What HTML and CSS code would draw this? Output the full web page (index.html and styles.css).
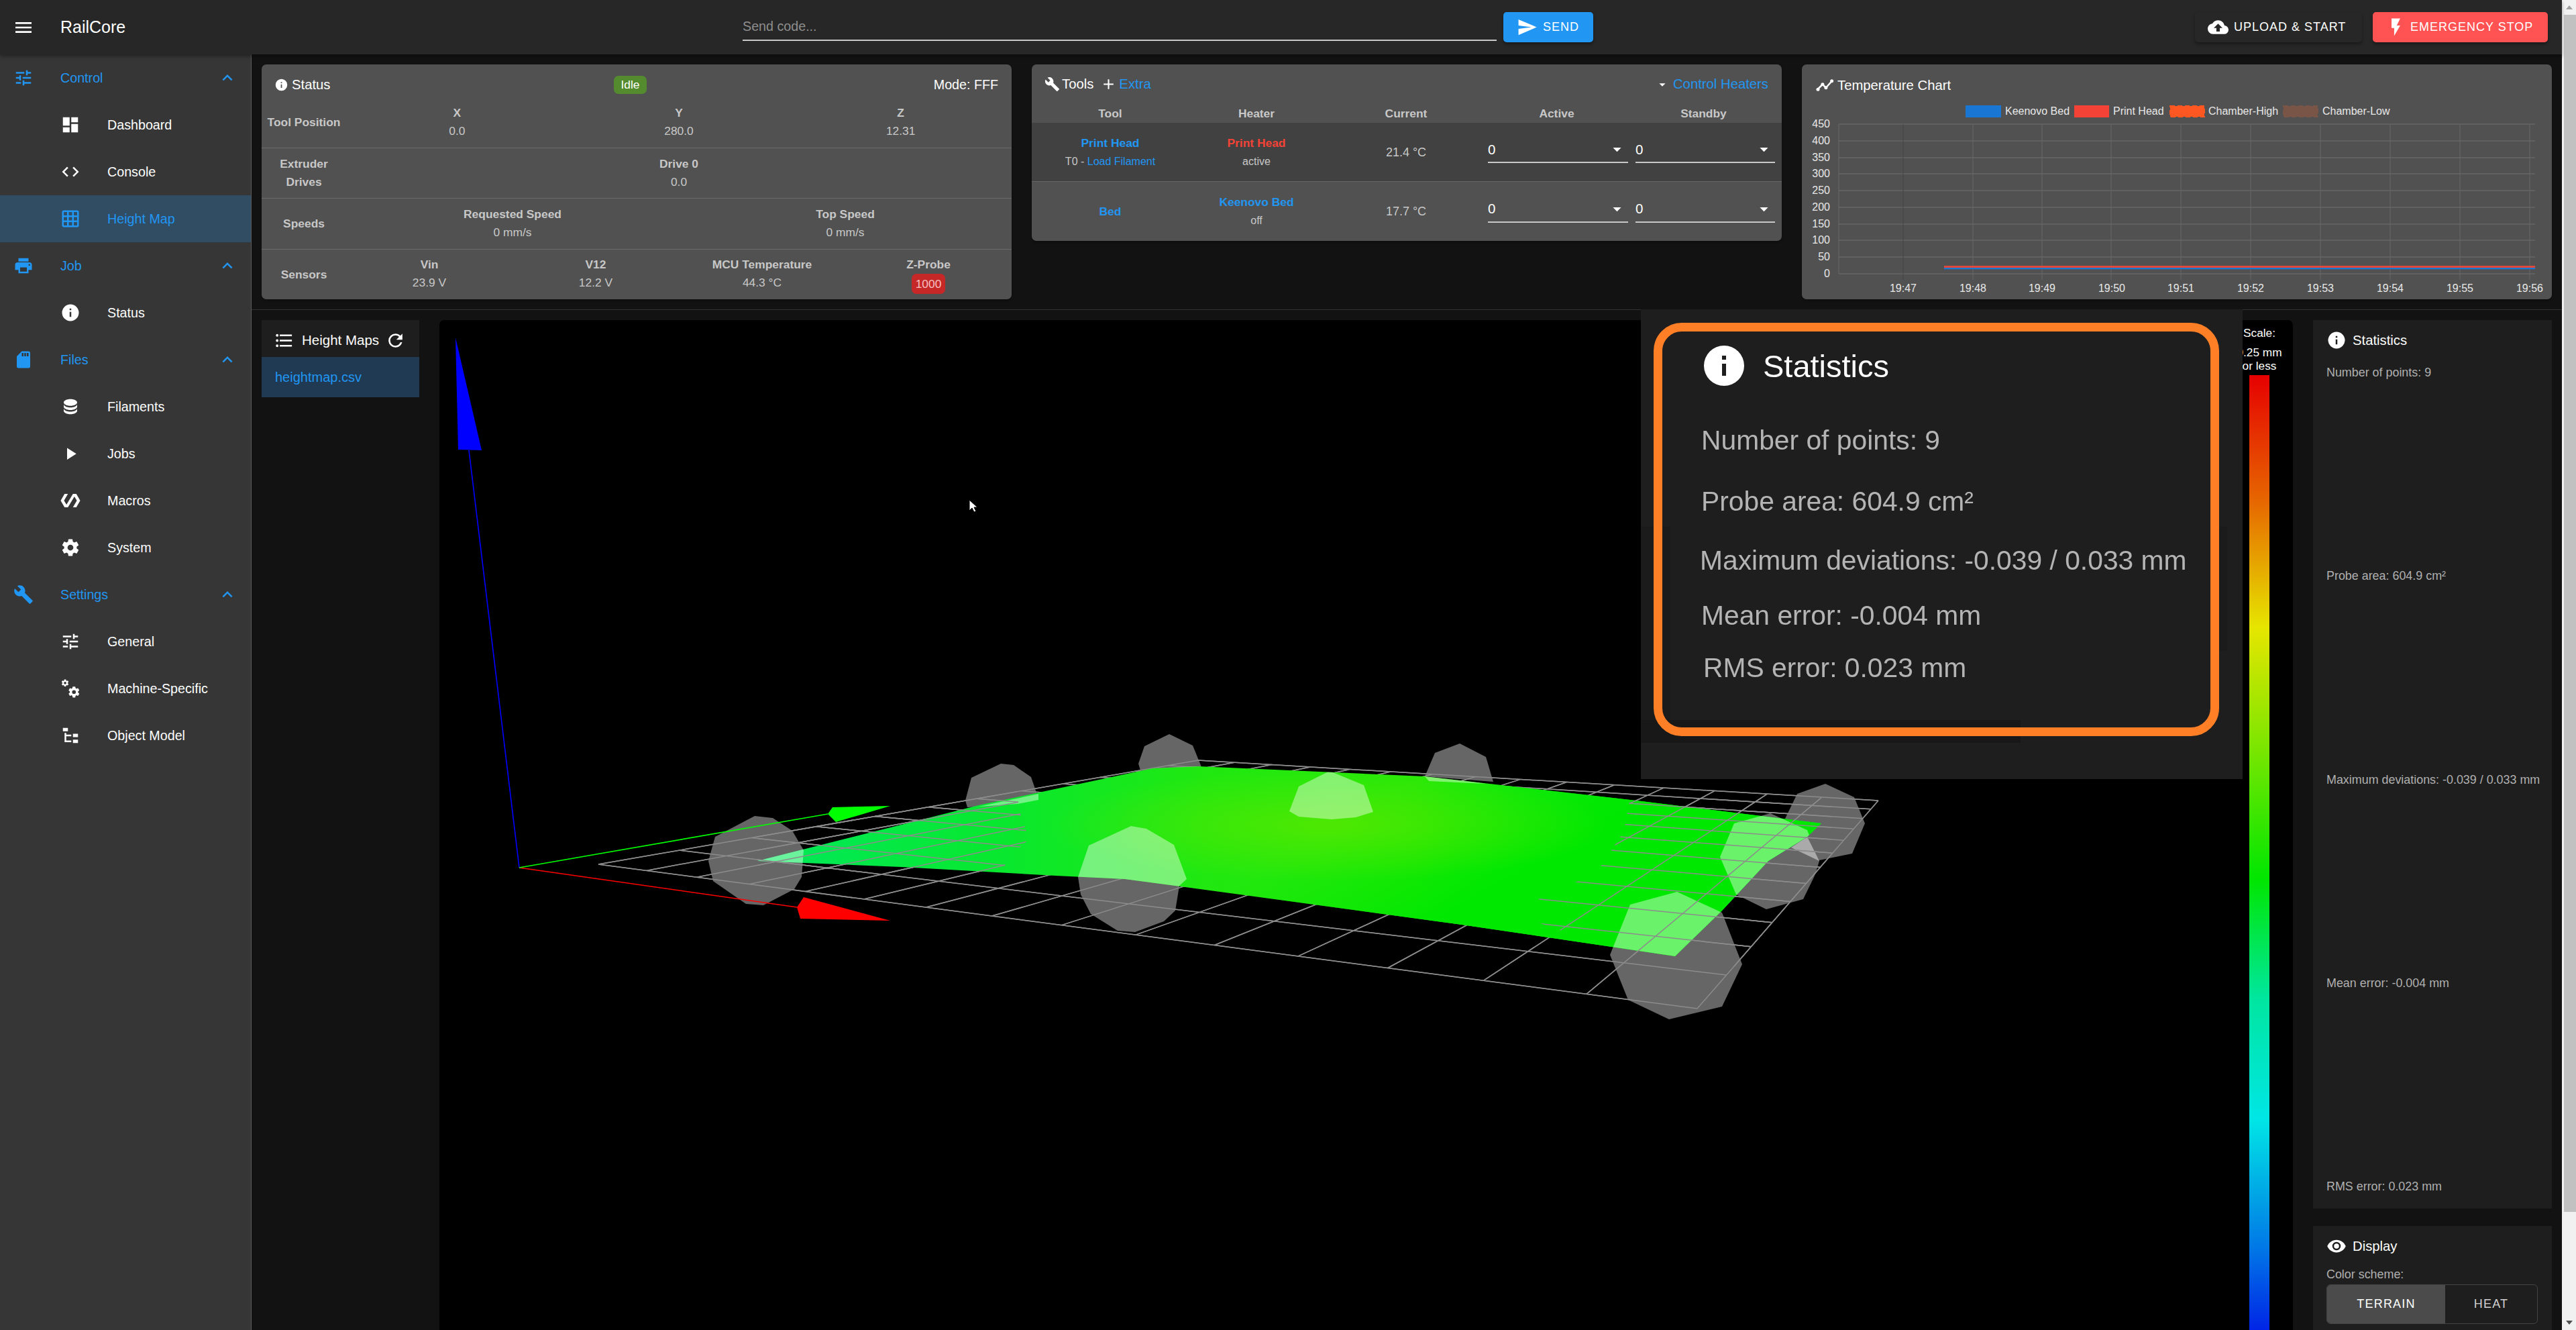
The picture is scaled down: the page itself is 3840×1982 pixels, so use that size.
FILE: index.html
```html
<!DOCTYPE html>
<html lang="en">
<head>
<meta charset="utf-8">
<title>RailCore</title>
<link rel="stylesheet" href="styles.css">
</head>
<body>
<svg class="sprite" aria-hidden="true">
  <defs>
    <path id="p-cog" d="M12,15.5A3.5,3.5 0 0,1 8.5,12A3.5,3.5 0 0,1 12,8.5A3.5,3.5 0 0,1 15.5,12A3.5,3.5 0 0,1 12,15.5M19.43,12.97C19.47,12.65 19.5,12.33 19.5,12C19.5,11.67 19.47,11.34 19.43,11L21.54,9.37C21.73,9.22 21.78,8.95 21.66,8.73L19.66,5.27C19.54,5.05 19.27,4.96 19.05,5.05L16.56,6.05C16.04,5.66 15.5,5.32 14.87,5.07L14.5,2.42C14.46,2.18 14.25,2 14,2H10C9.75,2 9.54,2.18 9.5,2.42L9.13,5.07C8.5,5.32 7.96,5.66 7.44,6.05L4.95,5.05C4.73,4.96 4.46,5.05 4.34,5.27L2.34,8.73C2.21,8.95 2.27,9.22 2.46,9.37L4.57,11C4.53,11.34 4.5,11.67 4.5,12C4.5,12.33 4.53,12.65 4.57,12.97L2.46,14.63C2.27,14.78 2.21,15.05 2.34,15.27L4.34,18.73C4.46,18.95 4.73,19.03 4.95,18.95L7.44,17.94C7.96,18.34 8.5,18.68 9.13,18.93L9.5,21.58C9.54,21.82 9.75,22 10,22H14C14.25,22 14.46,21.82 14.5,21.58L14.87,18.93C15.5,18.67 16.04,18.34 16.56,17.94L19.05,18.95C19.27,19.03 19.54,18.95 19.66,18.73L21.66,15.27C21.78,15.05 21.73,14.78 21.54,14.63L19.43,12.97Z"/>
  </defs>
  <symbol id="i-menu" viewBox="0 0 24 24"><path d="M3,6H21V8H3V6M3,11H21V13H3V11M3,16H21V18H3V16Z"/></symbol>
  <symbol id="i-tune" viewBox="0 0 24 24"><path d="M3,17V19H9V17H3M3,5V7H13V5H3M13,21V19H21V17H13V15H11V21H13M7,9V11H3V13H7V15H9V9H7M21,13V11H11V13H21M15,9H17V7H21V5H17V3H15V9Z"/></symbol>
  <symbol id="i-dash" viewBox="0 0 24 24"><path d="M13,3V9H21V3M13,21H21V11H13M3,21H11V15H3M3,13H11V3H3V13Z"/></symbol>
  <symbol id="i-code" viewBox="0 0 24 24"><path d="M14.6,16.6L19.2,12L14.6,7.4L16,6L22,12L16,18L14.6,16.6M9.4,16.6L4.8,12L9.4,7.4L8,6L2,12L8,18L9.4,16.6Z"/></symbol>
  <symbol id="i-grid" viewBox="0 0 24 24"><path d="M10,4V8H14V4H10M16,4V8H20V4H16M16,10V14H20V10H16M16,16V20H20V16H16M14,20V16H10V20H14M8,20V16H4V20H8M8,14V10H4V14H8M8,8V4H4V8H8M10,14H14V10H10V14M4,2H20A2,2 0 0,1 22,4V20A2,2 0 0,1 20,22H4C2.92,22 2,21.1 2,20V4A2,2 0 0,1 4,2Z"/></symbol>
  <symbol id="i-print" viewBox="0 0 24 24"><path d="M18,3H6V7H18M19,12A1,1 0 0,1 18,11A1,1 0 0,1 19,10A1,1 0 0,1 20,11A1,1 0 0,1 19,12M16,19H8V14H16M19,8H5A3,3 0 0,0 2,11V17H6V21H18V17H22V11A3,3 0 0,0 19,8Z"/></symbol>
  <symbol id="i-info" viewBox="0 0 24 24"><path d="M13,9H11V7H13M13,17H11V11H13M12,2A10,10 0 0,0 2,12A10,10 0 0,0 12,22A10,10 0 0,0 22,12A10,10 0 0,0 12,2Z"/></symbol>
  <symbol id="i-sd" viewBox="0 0 24 24"><path d="M18,8H16V4H18M15,8H13V4H15M12,8H10V4H12M18,2H10L4,8V20A2,2 0 0,0 6,22H18A2,2 0 0,0 20,20V4A2,2 0 0,0 18,2Z"/></symbol>
  <symbol id="i-db" viewBox="0 0 24 24"><path d="M12,3C7.58,3 4,4.79 4,7C4,9.21 7.58,11 12,11C16.42,11 20,9.21 20,7C20,4.79 16.42,3 12,3M4,9V12C4,14.21 7.58,16 12,16C16.42,16 20,14.21 20,12V9C20,11.21 16.42,13 12,13C7.58,13 4,11.21 4,9M4,14V17C4,19.21 7.58,21 12,21C16.42,21 20,19.21 20,17V14C20,16.21 16.42,18 12,18C7.58,18 4,16.21 4,14Z"/></symbol>
  <symbol id="i-play" viewBox="0 0 24 24"><path d="M8,5.14V19.14L19,12.14L8,5.14Z"/></symbol>
  <symbol id="i-poly" viewBox="0 0 24 24"><path d="M19,4H15L7.3,16.89L4.35,12L9,4H5L0.35,12L5,20H9L16.7,7.11L19.65,12L15,20H19L23.65,12L19,4Z"/></symbol>
  <symbol id="i-cog" viewBox="0 0 24 24"><use href="#p-cog"/></symbol>
  <symbol id="i-cogs" viewBox="0 0 24 24"><use href="#p-cog" transform="translate(8.4,8.4) scale(.65)"/><use href="#p-cog" transform="translate(.6,.4) scale(.42)"/></symbol>
  <symbol id="i-wrench" viewBox="0 0 24 24"><path d="M22.7,19L13.6,9.9C14.5,7.6 14,4.9 12.1,3C10.1,1 7.1,0.6 4.7,1.7L9,6L6,9L1.6,4.7C0.4,7.1 0.9,10.1 2.9,12.1C4.8,14 7.5,14.5 9.8,13.6L18.9,22.7C19.3,23.1 19.9,23.1 20.3,22.7L22.6,20.4C23.1,20 23.1,19.3 22.7,19Z"/></symbol>
  <symbol id="i-tree" viewBox="0 0 24 24"><path d="M3,3H9V7H3V3M15,10H21V14H15V10M15,17H21V21H15V17M13,13H7V18H13V20H7L5,20V9H7V11H13V13Z"/></symbol>
  <symbol id="i-up" viewBox="0 0 24 24"><path d="M7.41,15.41L12,10.83L16.59,15.41L18,14L12,8L6,14L7.41,15.41Z"/></symbol>
  <symbol id="i-list" viewBox="0 0 24 24"><path d="M7,5H21V7H7V5M7,13V11H21V13H7M4,4.5A1.5,1.5 0 0,1 5.5,6A1.5,1.5 0 0,1 4,7.5A1.5,1.5 0 0,1 2.5,6A1.5,1.5 0 0,1 4,4.5M4,10.5A1.5,1.5 0 0,1 5.5,12A1.5,1.5 0 0,1 4,13.5A1.5,1.5 0 0,1 2.5,12A1.5,1.5 0 0,1 4,10.5M7,19V17H21V19H7M4,16.5A1.5,1.5 0 0,1 5.5,18A1.5,1.5 0 0,1 4,19.5A1.5,1.5 0 0,1 2.5,18A1.5,1.5 0 0,1 4,16.5Z"/></symbol>
  <symbol id="i-refresh" viewBox="0 0 24 24"><path d="M17.65,6.35C16.2,4.9 14.21,4 12,4A8,8 0 0,0 4,12A8,8 0 0,0 12,20C15.73,20 18.84,17.45 19.73,14H17.65C16.83,16.33 14.61,18 12,18A6,6 0 0,1 6,12A6,6 0 0,1 12,6C13.66,6 15.14,6.69 16.22,7.78L13,11H20V4L17.65,6.35Z"/></symbol>
  <symbol id="i-send" viewBox="0 0 24 24"><path d="M2,21L23,12L2,3V10L17,12L2,14V21Z"/></symbol>
  <symbol id="i-cloud" viewBox="0 0 24 24"><path d="M14,13V17H10V13H7L12,8L17,13M19.35,10.03C18.67,6.59 15.64,4 12,4C9.11,4 6.6,5.64 5.35,8.03C2.34,8.36 0,10.9 0,14A6,6 0 0,0 6,20H19A5,5 0 0,0 24,15C24,12.36 21.95,10.22 19.35,10.03Z"/></symbol>
  <symbol id="i-flash" viewBox="0 0 24 24"><path d="M7,2V13H10V22L17,10H13L17,2H7Z"/></symbol>
  <symbol id="i-plus" viewBox="0 0 24 24"><path d="M19,13H13V19H11V13H5V11H11V5H13V11H19V13Z"/></symbol>
  <symbol id="i-down" viewBox="0 0 24 24"><path d="M7,10L12,15L17,10H7Z"/></symbol>
  <symbol id="i-chart" viewBox="0 0 24 24"><path d="M3.5,18.49L9.5,12.48L13.5,16.48L22,6.92L20.59,5.5L13.5,13.5L9.5,9.5L2,16.99L3.5,18.49Z"/><circle cx="4" cy="17" r="2"/><circle cx="9.5" cy="11" r="2"/><circle cx="13.5" cy="15" r="2"/><circle cx="20.5" cy="7" r="2"/></symbol>
  <symbol id="i-eye" viewBox="0 0 24 24"><path d="M12,9A3,3 0 0,0 9,12A3,3 0 0,0 12,15A3,3 0 0,0 15,12A3,3 0 0,0 12,9M12,17A5,5 0 0,1 7,12A5,5 0 0,1 12,7A5,5 0 0,1 17,12A5,5 0 0,1 12,17M12,4.5C7,4.5 2.73,7.61 1,12C2.73,16.39 7,19.5 12,19.5C17,19.5 21.27,16.39 23,12C21.27,7.61 17,4.5 12,4.5Z"/></symbol>
</svg>

<div class="viewport">
  <div class="app">
    <header class="topbar">
      <div class="brand">
        <svg class="ico ico-menu"><use href="#i-menu"/></svg>
        <span class="brand-name">RailCore</span>
      </div>
      <div class="code-input">Send code...</div>
      <button class="btn btn-send"><svg class="ico ico-btn"><use href="#i-send"/></svg>SEND</button>
      <div class="spacer"></div>
      <button class="btn btn-upload"><svg class="ico ico-btn"><use href="#i-cloud"/></svg>UPLOAD &amp; START</button>
      <button class="btn btn-stop"><svg class="ico ico-btn"><use href="#i-flash"/></svg>EMERGENCY STOP</button>
    </header>

    <div class="body">
      <nav class="sidebar">
        <div class="nav-group"><svg class="ico ico-nav"><use href="#i-tune"/></svg><span class="nav-label">Control</span><svg class="ico ico-nav chev"><use href="#i-up"/></svg></div>
        <div class="nav-item"><svg class="ico ico-nav"><use href="#i-dash"/></svg><span class="nav-label">Dashboard</span></div>
        <div class="nav-item"><svg class="ico ico-nav"><use href="#i-code"/></svg><span class="nav-label">Console</span></div>
        <div class="nav-item active"><svg class="ico ico-nav"><use href="#i-grid"/></svg><span class="nav-label">Height Map</span></div>
        <div class="nav-group"><svg class="ico ico-nav"><use href="#i-print"/></svg><span class="nav-label">Job</span><svg class="ico ico-nav chev"><use href="#i-up"/></svg></div>
        <div class="nav-item"><svg class="ico ico-nav"><use href="#i-info"/></svg><span class="nav-label">Status</span></div>
        <div class="nav-group"><svg class="ico ico-nav"><use href="#i-sd"/></svg><span class="nav-label">Files</span><svg class="ico ico-nav chev"><use href="#i-up"/></svg></div>
        <div class="nav-item"><svg class="ico ico-nav"><use href="#i-db"/></svg><span class="nav-label">Filaments</span></div>
        <div class="nav-item"><svg class="ico ico-nav"><use href="#i-play"/></svg><span class="nav-label">Jobs</span></div>
        <div class="nav-item"><svg class="ico ico-nav"><use href="#i-poly"/></svg><span class="nav-label">Macros</span></div>
        <div class="nav-item"><svg class="ico ico-nav"><use href="#i-cog"/></svg><span class="nav-label">System</span></div>
        <div class="nav-group"><svg class="ico ico-nav"><use href="#i-wrench"/></svg><span class="nav-label">Settings</span><svg class="ico ico-nav chev"><use href="#i-up"/></svg></div>
        <div class="nav-item"><svg class="ico ico-nav"><use href="#i-tune"/></svg><span class="nav-label">General</span></div>
        <div class="nav-item"><svg class="ico ico-nav"><use href="#i-cogs"/></svg><span class="nav-label">Machine-Specific</span></div>
        <div class="nav-item"><svg class="ico ico-nav"><use href="#i-tree"/></svg><span class="nav-label">Object Model</span></div>
      </nav>

      <main class="main">
        <section class="cards">
          <article class="card status-card">
            <div class="status-head">
              <div class="card-title"><svg class="ico ico-sm"><use href="#i-info"/></svg>Status</div>
              <span class="chip chip-idle">Idle</span>
              <div class="mode">Mode: FFF</div>
            </div>
            <div class="s-row">
              <div class="s-head">Tool Position</div>
              <div class="s-cols s-cols-3">
                <div class="s-cell"><b>X</b><span>0.0</span></div>
                <div class="s-cell"><b>Y</b><span>280.0</span></div>
                <div class="s-cell"><b>Z</b><span>12.31</span></div>
              </div>
            </div>
            <div class="s-row">
              <div class="s-head">Extruder<br>Drives</div>
              <div class="s-cols s-cols-1">
                <div class="s-cell"><b>Drive 0</b><span>0.0</span></div>
              </div>
            </div>
            <div class="s-row">
              <div class="s-head">Speeds</div>
              <div class="s-cols s-cols-2">
                <div class="s-cell"><b>Requested Speed</b><span>0 mm/s</span></div>
                <div class="s-cell"><b>Top Speed</b><span>0 mm/s</span></div>
              </div>
            </div>
            <div class="s-row s-row-last">
              <div class="s-head">Sensors</div>
              <div class="s-cols s-cols-4">
                <div class="s-cell"><b>Vin</b><span>23.9 V</span></div>
                <div class="s-cell"><b>V12</b><span>12.2 V</span></div>
                <div class="s-cell"><b>MCU Temperature</b><span>44.3 °C</span></div>
                <div class="s-cell"><b>Z-Probe</b><span class="chip chip-probe">1000</span></div>
              </div>
            </div>
          </article>

          <article class="card tools-card">
            <div class="tools-head">
              <div class="card-title"><svg class="ico ico-wrench"><use href="#i-wrench"/></svg>Tools<svg class="ico ico-plus"><use href="#i-plus"/></svg><span class="link">Extra</span></div>
              <div class="heaters"><svg class="ico ico-caret"><use href="#i-down"/></svg><span class="link">Control Heaters</span></div>
            </div>
            <div class="t-row t-header">
              <div>Tool</div><div>Heater</div><div>Current</div><div class="t-h-active">Active</div><div class="t-h-standby">Standby</div>
            </div>
            <div class="t-row t-line t-selected">
              <div class="t-cell"><b class="link">Print Head</b><small>T0 - <span class="link">Load Filament</span></small></div>
              <div class="t-cell"><b class="t-hot">Print Head</b><small>active</small></div>
              <div class="t-cell t-temp">21.4 °C</div>
              <div class="t-select t-sel-a"><span>0</span><svg class="ico ico-arrow"><use href="#i-down"/></svg></div>
              <div class="t-select t-sel-s"><span>0</span><svg class="ico ico-arrow"><use href="#i-down"/></svg></div>
            </div>
            <div class="t-row t-line">
              <div class="t-cell"><b class="link">Bed</b></div>
              <div class="t-cell"><b class="link">Keenovo Bed</b><small>off</small></div>
              <div class="t-cell t-temp">17.7 °C</div>
              <div class="t-select t-sel-a"><span>0</span><svg class="ico ico-arrow"><use href="#i-down"/></svg></div>
              <div class="t-select t-sel-s"><span>0</span><svg class="ico ico-arrow"><use href="#i-down"/></svg></div>
            </div>
          </article>

          <article class="card chart-card">
            <div class="chart-head"><div class="card-title"><svg class="ico ico-chart"><use href="#i-chart"/></svg>Temperature Chart</div></div>
            <svg class="chart" viewBox="2686 140 1118 306">
              <g class="legend-swatches">
                <rect x="2930" y="157" width="53" height="18" fill="#1976d2"/>
                <rect x="3092" y="157" width="52" height="18" fill="#f44336"/>
                <rect x="3235" y="158" width="51" height="16" fill="#ff5722" stroke="#ff5722" stroke-width="2" stroke-dasharray="7 4"/>
                <rect x="3404" y="158" width="51" height="16" fill="#795548" stroke="#795548" stroke-width="2" stroke-dasharray="7 4"/>
              </g>
              <g class="chart-text">
                <text x="2989" y="171">Keenovo Bed</text>
                <text x="3150" y="171">Print Head</text>
                <text x="3292" y="171">Chamber-High</text>
                <text x="3462" y="171">Chamber-Low</text>
              </g>
              <g class="chart-grid-h">
                <line x1="2741" x2="3779" y1="185" y2="185"/><line x1="2741" x2="3779" y1="210" y2="210"/><line x1="2741" x2="3779" y1="235" y2="235"/><line x1="2741" x2="3779" y1="259" y2="259"/><line x1="2741" x2="3779" y1="284" y2="284"/><line x1="2741" x2="3779" y1="309" y2="309"/><line x1="2741" x2="3779" y1="334" y2="334"/><line x1="2741" x2="3779" y1="358" y2="358"/><line x1="2741" x2="3779" y1="383" y2="383"/><line x1="2741" x2="3779" y1="408" y2="408" stroke-width="1.5"/>
              </g>
              <g class="chart-grid-v">
                <line x1="2741" x2="2741" y1="185" y2="408"/><line x1="2837" x2="2837" y1="185" y2="417" class="chart-v-first"/><line x1="2941" x2="2941" y1="185" y2="417"/><line x1="3044" x2="3044" y1="185" y2="417"/><line x1="3147" x2="3147" y1="185" y2="417"/><line x1="3251" x2="3251" y1="185" y2="417"/><line x1="3355" x2="3355" y1="185" y2="417"/><line x1="3459" x2="3459" y1="185" y2="417"/><line x1="3563" x2="3563" y1="185" y2="417"/><line x1="3667" x2="3667" y1="185" y2="417"/><line x1="3771" x2="3771" y1="185" y2="417"/>
              </g>
              <line x1="2898" x2="3779" y1="400" y2="400" stroke="#1976d2" stroke-width="2.5"/>
              <line x1="2898" x2="3779" y1="397.5" y2="397.5" stroke="#e0483c" stroke-width="3"/>
              <g class="chart-text chart-y">
                <text x="2728" y="190">450</text><text x="2728" y="215">400</text><text x="2728" y="240">350</text><text x="2728" y="264">300</text><text x="2728" y="289">250</text><text x="2728" y="314">200</text><text x="2728" y="339">150</text><text x="2728" y="363">100</text><text x="2728" y="388">50</text><text x="2728" y="413">0</text>
              </g>
              <g class="chart-text chart-x">
                <text x="2837" y="435">19:47</text><text x="2941" y="435">19:48</text><text x="3044" y="435">19:49</text><text x="3148" y="435">19:50</text><text x="3251" y="435">19:51</text><text x="3355" y="435">19:52</text><text x="3459" y="435">19:53</text><text x="3563" y="435">19:54</text><text x="3667" y="435">19:55</text><text x="3771" y="435">19:56</text>
              </g>
            </svg>
          </article>
        </section>

        <hr class="divider">

        <section class="maps">
          <aside class="map-list">
            <div class="map-list-head"><svg class="ico ico-list"><use href="#i-list"/></svg><span>Height Maps</span><svg class="ico ico-list"><use href="#i-refresh"/></svg></div>
            <div class="map-file">heightmap.csv</div>
          </aside>

          <div class="canvas">
            <svg class="scene" viewBox="655 477 2763 1505">
              <defs>
                <clipPath id="surf"><polygon points="1129,1283 1459,1200 1718,1145 1786,1142 1900,1147 2124,1157 2439,1193 2715,1227 2694,1247 2636,1283 2567,1357 2497,1425 2179,1378 1900,1340 1677,1310 1574,1305 1344,1292"/></clipPath>
                <clipPath id="grid-left"><polygon points="1129,1100 1505,1100 1520,1210 1534,1250 1502,1280 1494,1300 1129,1300"/></clipPath>
                <clipPath id="grid-right"><polygon points="2430,1190 2730,1190 2730,1440 2480,1440 2250,1360 2380,1300 2420,1240"/></clipPath>
                <linearGradient id="surf-base" gradientUnits="userSpaceOnUse" x1="1129" y1="0" x2="2715" y2="0">
                  <stop offset="0" stop-color="#00e85c"/><stop offset=".22" stop-color="#08e830"/><stop offset=".42" stop-color="#20e810"/><stop offset=".62" stop-color="#28e808"/><stop offset=".85" stop-color="#06e816"/><stop offset="1" stop-color="#00e838"/>
                </linearGradient>
                <radialGradient id="surf-glow" gradientUnits="userSpaceOnUse" cx="1980" cy="1400" r="420" gradientTransform="translate(0 950) scale(1 .2)">
                  <stop offset="0" stop-color="#58e800" stop-opacity=".8"/><stop offset="1" stop-color="#58e800" stop-opacity="0"/>
                </radialGradient>
                <linearGradient id="surf-bottom" gradientUnits="userSpaceOnUse" x1="2000" y1="1230" x2="2100" y2="1400">
                  <stop offset="0" stop-color="#00e800" stop-opacity="0"/><stop offset="1" stop-color="#00e800"/>
                </linearGradient>
              </defs>

              <path id="grid-lines" class="grid-lines"/>
              <g class="probe">
                <polygon points="1125,1216 1152,1219 1181,1238 1198,1267 1195,1307 1184,1325 1138,1349 1112,1347 1063,1313 1056,1283 1066,1247"/>
                <polygon points="1492,1138 1511,1140 1537,1158 1548,1190 1459,1202 1442,1203 1439,1193 1448,1159"/>
                <polygon points="1743,1094 1778,1111 1791,1143 1700,1148 1697,1138 1706,1112"/>
                <polygon points="1686,1231 1709,1235 1750,1259 1769,1310 1758,1320 1752,1357 1735,1373 1692,1389 1666,1387 1626,1362 1611,1333 1607,1307 1623,1260"/>
                <polygon points="2176,1108 2215,1128 2226,1165 2124,1157 2139,1122"/>
                <polygon points="2721,1168 2764,1188 2780,1227 2761,1272 2712,1282 2688,1253 2661,1220 2679,1183"/>
                <polygon points="2639,1212 2694,1237 2712,1283 2706,1303 2688,1340 2633,1355 2588,1333 2564,1277 2585,1227"/>
                <polygon points="2500,1329 2567,1360 2597,1437 2567,1500 2488,1519 2427,1490 2400,1423 2430,1348"/>
              </g>
              <polygon points="2694,1247 2712,1283 2670,1263" fill="#aaaaaa"/>
              <use href="#grid-lines"/>

              <g clip-path="url(#surf)">
                <rect x="1129" y="1130" width="1600" height="310" fill="url(#surf-base)"/>
                <rect x="1129" y="1130" width="1600" height="310" fill="url(#surf-bottom)"/>
                <rect x="1129" y="1130" width="1600" height="310" fill="url(#surf-glow)"/>
              </g>
              <g class="probe-light" clip-path="url(#surf)">
                <polygon points="1125,1216 1152,1219 1181,1238 1198,1267 1195,1307 1184,1325 1138,1349 1112,1347 1063,1313 1056,1283 1066,1247"/>
                <polygon points="1686,1231 1709,1235 1750,1259 1769,1310 1758,1320 1752,1357 1735,1373 1692,1389 1666,1387 1626,1362 1611,1333 1607,1307 1623,1260"/>
                <polygon points="1982,1149 2033,1170 2047,1210 2021,1218 1985,1221 1936,1217 1922,1209 1936,1172"/>
                <polygon points="2639,1212 2694,1237 2712,1283 2706,1303 2688,1340 2633,1355 2588,1333 2564,1277 2585,1227"/>
                <polygon points="2500,1329 2567,1360 2597,1437 2567,1500 2488,1519 2427,1490 2400,1423 2430,1348"/>
                <polygon points="1548,1183 1548,1192 1517,1198 1459,1202"/>
                <polygon points="1720,1145 1791,1142 1745,1141"/>
                <polygon points="2124,1157 2130,1164 2215,1168 2170,1160"/>
              </g>
              <g clip-path="url(#grid-left)"><use href="#grid-lines"/></g>
              <g clip-path="url(#grid-right)"><use href="#grid-lines"/></g>

              <line x1="774" y1="1293" x2="699" y2="671" class="axis axis-z"/>
              <polygon points="679,503 718,671 683,670" fill="#0000ff"/>
              <line x1="774" y1="1293" x2="1188" y2="1352" class="axis axis-x"/>
              <polygon points="1198,1337 1327,1372 1193,1369 1188,1352" fill="#ff0000"/>
              <line x1="774" y1="1293" x2="1234" y2="1213" class="axis axis-y"/>
              <polygon points="1241,1203 1327,1201 1246,1225 1234,1213" fill="#00ff00"/>
              <polygon points="1445,745 1445,761 1449,757 1452,763 1455,762 1452,756 1457,756" fill="#fff" stroke="#000" stroke-width="1"/>
            </svg>
            <div class="scale-labels"><span>Scale:</span><span class="scale-gap">0.25 mm</span><span>or less</span></div>
            <div class="scale-bar"></div>
          </div>

          <aside class="side">
            <div class="panel stats">
              <div class="panel-title"><svg class="ico ico-panel"><use href="#i-info"/></svg>Statistics</div>
              <div class="stats-list">
                <span>Number of points: 9</span>
                <span>Probe area: 604.9 cm²</span>
                <span>Maximum deviations: -0.039 / 0.033 mm</span>
                <span>Mean error: -0.004 mm</span>
                <span>RMS error: 0.023 mm</span>
              </div>
            </div>
            <div class="panel display">
              <div class="panel-title"><svg class="ico ico-panel"><use href="#i-eye"/></svg>Display</div>
              <div class="scheme-label">Color scheme:</div>
              <div class="segmented"><span class="seg seg-on">TERRAIN</span><span class="seg">HEAT</span></div>
            </div>
          </aside>

          <div class="callout">
            <div class="callout-strip"></div>
            <div class="callout-side"></div>
            <div class="callout-side-r"></div>
            <div class="callout-frame">
              <div class="callout-inner">
                <div class="callout-head"><svg class="ico ico-callout"><use href="#i-info"/></svg>Statistics</div>
                <div class="callout-line cl-1">Number of points: 9</div>
                <div class="callout-line cl-2">Probe area: 604.9 cm²</div>
                <div class="callout-line cl-3">Maximum deviations: -0.039 / 0.033 mm</div>
                <div class="callout-line cl-4">Mean error: -0.004 mm</div>
                <div class="callout-line cl-5">RMS error: 0.023 mm</div>
              </div>
            </div>
          </div>
        </section>
      </main>
    </div>
  </div>

  <div class="scrollbar">
    <div class="sb-arrow sb-up"></div>
    <div class="sb-thumb"></div>
    <div class="sb-track"></div>
    <div class="sb-arrow sb-down"></div>
  </div>
</div>
<script src="script.js"></script>
</body>
</html>
```

FILE: styles.css
```css
* { box-sizing: border-box; }
html, body { margin: 0; padding: 0; height: 100%; overflow: hidden; }
body { font-family: "Liberation Sans", Arial, sans-serif; background: #121212; color: #fff; }
.sprite { position: absolute; width: 0; height: 0; }
.ico { fill: currentColor; flex: none; display: block; }
.link { color: #2196f3; }

.viewport { display: flex; height: 1982px; width: 3840px; overflow: hidden; }
.app { width: 3819px; flex: none; display: flex; flex-direction: column; min-height: 0; }

/* top bar */
.topbar { height: 81px; flex: none; display: flex; align-items: center; background: #272727; padding-right: 21px; box-shadow: 0 3px 5px rgba(0,0,0,.35); position: relative; z-index: 3; }
.brand { width: 1107px; flex: none; display: flex; align-items: center; padding-left: 19px; }
.ico-menu { width: 32px; height: 32px; }
.brand-name { font-size: 25px; margin-left: 39px; }
.code-input { width: 1124px; flex: none; height: 42px; margin-top: -1px; border-bottom: 2px solid #c8c8c8; color: #8e8e8e; font-size: 19.7px; line-height: 41px; }
.btn { display: flex; align-items: center; border: 0; border-radius: 5px; color: #fff; font-family: inherit; font-size: 18px; letter-spacing: 1px; height: 45px; padding: 0; box-shadow: 0 3px 4px rgba(0,0,0,.35); }
.ico-btn { width: 31px; height: 31px; }
.btn-send { width: 134px; margin-left: 10px; background: #2196f3; padding-left: 20px; gap: 8px; }
.spacer { flex: 1; }
.btn-upload { width: 249px; background: #272727; padding-left: 19px; gap: 8px; color: #fff; }
.btn-stop { width: 261px; margin-left: 16px; background: #ff5252; padding-left: 19px; gap: 6px; }

/* sidebar */
.body { flex: 1; min-height: 0; display: flex; }
.sidebar { width: 375px; flex: none; background: #363636; border-right: 1px solid #5a5a5a; }
.nav-group, .nav-item { height: 70px; display: flex; align-items: center; font-size: 19.7px; color: #fff; }
.nav-group { color: #2196f3; padding-left: 20px; }
.nav-item { padding-left: 90px; }
.ico-nav { width: 30px; height: 30px; }
.nav-label { margin-left: 40px; }
.nav-group .nav-label { flex: 1; }
.chev { margin-right: 20px; }
.nav-item.active { background: #314d64; color: #2196f3; }

/* main */
.main { flex: 1; min-width: 0; display: flex; flex-direction: column; padding: 15px 15px 0; background: #121212; }
.cards { display: grid; grid-template-columns: repeat(3, 1fr); gap: 30px; align-items: start; flex: none; }
.card { background: #515151; border-radius: 7px; box-shadow: 0 2px 3px rgba(0,0,0,.3); }
.card-title { display: flex; align-items: center; font-size: 20.3px; color: #fff; }
.ico-sm { width: 21px; height: 21px; margin-right: 5px; }
.divider { flex: none; margin: 15px -15px 15px; height: 1px; border: 0; background: #333; }

/* status */
.status-card { height: 350px; overflow: hidden; }
.status-head { height: 49px; padding: 11px 20px 0 19px; display: grid; grid-template-columns: 1fr auto 1fr; align-items: center; }
.chip { display: inline-block; border-radius: 7px; }
.chip-idle { background: #558b2f; color: #fff; font-size: 17.4px; width: 49px; height: 27px; line-height: 27px; text-align: center; margin-right: 18px; }
.mode { text-align: right; font-size: 19.7px; }
.s-row { height: 75.5px; display: grid; grid-template-columns: 126px 1fr; align-items: center; border-bottom: 1px solid #6a6a6a; }
.s-row-last { border-bottom: 0; }
.s-head { text-align: center; font-weight: 700; font-size: 17.4px; line-height: 27px; color: #c8c8c8; }
.s-cols { display: grid; }
.s-cols-1 { grid-template-columns: 1fr; }
.s-cols-2 { grid-template-columns: repeat(2, 1fr); }
.s-cols-3 { grid-template-columns: repeat(3, 1fr); }
.s-cols-4 { grid-template-columns: repeat(4, 1fr); }
.s-cell { display: flex; flex-direction: column; align-items: center; font-size: 17.4px; line-height: 27px; color: #c8c8c8; }
.s-cell b { font-weight: 700; }
.chip-probe { background: #c62828; color: #f6c0c0; width: 50px; height: 30px; line-height: 30px; text-align: center; }

/* tools */
.tools-card { height: 263px; overflow: hidden; }
.tools-head { height: 59px; padding: 0 20px 0 19px; display: flex; align-items: center; justify-content: space-between; }
.ico-wrench { width: 23px; height: 23px; margin-right: 3px; }
.ico-plus { width: 25px; height: 25px; margin: 0 3px 0 10px; }
.heaters { display: flex; align-items: center; font-size: 20.3px; }
.ico-caret { width: 22px; height: 22px; margin-right: 5px; color: #fff; }
.t-row { display: grid; grid-template-columns: 234px 202px 244px 213px 225px; }
.t-header { height: 28px; align-items: center; text-align: center; font-weight: 700; font-size: 17.4px; color: #c8c8c8; }
.t-h-active { padding-right: 8px; }
.t-h-standby { padding-right: 8px; }
.t-line { height: 88px; align-items: center; border-bottom: 1px solid #666; }
.t-line:last-child { border-bottom: 0; }
.t-selected { background: #414141; }
.t-cell { display: flex; flex-direction: column; align-items: center; line-height: 28px; font-size: 17.4px; color: #c8c8c8; }
.t-cell b { font-weight: 700; }
.t-cell small { font-size: 16px; }
.t-hot { color: #f44336; }
.t-temp { font-size: 18px; }
.t-select { height: 39px; margin-top: -6px; border-bottom: 2px solid #c8c8c8; display: flex; align-items: center; justify-content: space-between; font-size: 20.5px; color: #fff; }
.t-sel-a { margin-right: 4px; }
.t-sel-s { margin: -6px 10px 0 7px; }
.ico-arrow { width: 29px; height: 29px; margin-right: 2px; }

/* chart */
.chart-card { height: 350px; overflow: hidden; }
.chart-head { height: 44px; padding: 16px 20px 0 19px; }
.ico-chart { width: 30px; height: 30px; margin-right: 4px; }
.chart { display: block; width: 1118px; height: 306px; }
.chart-text { fill: #e8e8e8; font-size: 16px; font-family: "Liberation Sans", Arial, sans-serif; }
.chart-y { text-anchor: end; }
.chart-x { text-anchor: middle; }
.chart-grid-h line { stroke: #707070; stroke-width: 1; }
.chart-grid-v line { stroke: #696969; stroke-width: 1; }
.chart-grid-v .chart-v-first { stroke: #444; }

/* lower section */
.maps { flex: 1; min-height: 0; display: flex; gap: 30px; position: relative; }
.map-list { width: 235px; flex: none; align-self: flex-start; }
.map-list-head { height: 55px; background: #1e1e1e; display: flex; align-items: center; padding: 5px 0 0 18px; font-size: 20.5px; }
.ico-list { width: 31px; height: 31px; }
.map-list-head span { margin: 0 9px 0 11px; }
.map-file { height: 60px; line-height: 60px; background: #1f3a52; color: #2196f3; font-size: 20px; padding-left: 20px; }

.canvas { flex: 1; min-width: 0; position: relative; background: #000; border-radius: 7px 7px 0 0; overflow: hidden; }
.scene { display: block; width: 2763px; height: 1505px; }
.grid-lines { fill: none; stroke: #8c8c8c; stroke-width: 1.5; }
.probe polygon { fill: #666; }
.probe-light polygon { fill: #fff; fill-opacity: .42; }
.axis { stroke-width: 1.6; }
.axis-x { stroke: #ff0000; }
.axis-y { stroke: #00ff00; }
.axis-z { stroke: #0000ff; }
.scale-labels { position: absolute; top: 9px; right: 0; width: 100px; display: flex; flex-direction: column; align-items: center; font-size: 17.3px; line-height: 20px; color: #fff; }
.scale-gap { margin-top: 9px; }
.scale-bar { position: absolute; left: 2698px; top: 82px; bottom: 0; width: 30px;
  background: linear-gradient(to bottom, #e60000 0, #e66800 190px, #e6e600 377px, #78e600 560px, #00e600 751px, #00e6a0 930px, #00e6e6 1109px, #0078e6 1300px, #0024e6 1423px); }

.side { width: 356px; flex: none; display: flex; flex-direction: column; gap: 26px; }
.panel { background: #1e1e1e; }
.panel-title { display: flex; align-items: center; font-size: 20.3px; color: #fff; gap: 9px; height: 30px; }
.ico-panel { width: 30px; height: 30px; }
.stats { flex: 1; min-height: 0; display: flex; flex-direction: column; padding: 15px 20px 22px 20px; }
.stats-list { flex: 1; margin-top: 22px; display: flex; flex-direction: column; justify-content: space-between; font-size: 17.9px; line-height: 22px; color: #b0b0b0; white-space: nowrap; }
.display { height: 155px; flex: none; padding: 15px 20px 0; }
.scheme-label { font-size: 17.9px; line-height: 22px; color: #b0b0b0; margin-top: 16px; }
.segmented { display: flex; margin-top: 4px; width: 315px; height: 59px; border: 1px solid #444; border-radius: 6px; overflow: hidden; }
.seg { flex: 1; display: flex; align-items: center; justify-content: center; font-size: 18px; letter-spacing: 1.2px; color: #d0d0d0; }
.seg-on { flex: none; width: 176px; background: #4b4b4b; color: #fff; }

/* pasted callout over the canvas */
.callout { position: absolute; left: 2056px; top: -16px; width: 897px; height: 700px; background: #1e1e1e; }
.callout-strip { position: absolute; left: 0; top: 612px; width: 566px; height: 34px; background: #181818; }
.callout-side { position: absolute; left: 0; top: 324px; width: 44px; height: 288px; background: #1b1b1b; }
.callout-side-r { position: absolute; left: 850px; top: 324px; width: 24px; height: 185px; background: #1b1b1b; }
.callout-frame { position: absolute; left: 19px; top: 20px; width: 843px; height: 616px; border: 13px solid #ff7f27; border-radius: 42px; }
.callout-inner { padding: 15px 0 0 58px; filter: blur(.6px); }
.callout-head { display: flex; align-items: center; height: 72px; margin-left: -2px; font-size: 47px; color: #fff; }
.ico-callout { width: 72px; height: 72px; margin-right: 22px; }
.callout-line { font-size: 40.8px; line-height: 50px; color: #b4b4b4; white-space: nowrap; }
.cl-1 { margin-top: 50px; }
.cl-2 { margin-top: 41px; }
.cl-3 { margin-top: 38px; margin-left: -2px; }
.cl-4 { margin-top: 32px; }
.cl-5 { margin-top: 28px; margin-left: 3px; }

/* window scrollbar */
.scrollbar { width: 21px; flex: none; display: flex; flex-direction: column; background: #f1f1f1; }
.sb-arrow { height: 22px; flex: none; position: relative; }
.sb-arrow::after { content: ""; position: absolute; left: 6px; border-left: 5px solid transparent; border-right: 5px solid transparent; }
.sb-up::after { top: 8px; border-bottom: 6px solid #a0a0a0; }
.sb-down::after { top: 8px; border-top: 6px solid #505050; }
.sb-thumb { height: 1784px; flex: none; margin-left: 3px; background: #c1c1c1; }
.sb-track { flex: 1; }
```

FILE: script.js
```js
// Draws the probe grid of the height map: a 15 x 12 grid seen in perspective.
(function () {
  var A = [892, 1288], D = [2530, 1503], C = [2800, 1193], B = [1786, 1133];
  var dx1 = D[0] - C[0], dx2 = B[0] - C[0], sx = A[0] - D[0] + C[0] - B[0];
  var dy1 = D[1] - C[1], dy2 = B[1] - C[1], sy = A[1] - D[1] + C[1] - B[1];
  var den = dx1 * dy2 - dx2 * dy1;
  var g = (sx * dy2 - dx2 * sy) / den, h = (dx1 * sy - sx * dy1) / den;
  var a = D[0] - A[0] + g * D[0], b = B[0] - A[0] + h * B[0];
  var d = D[1] - A[1] + g * D[1], e = B[1] - A[1] + h * B[1];
  function p(u, v) {
    var w = g * u + h * v + 1;
    return ((a * u + b * v + A[0]) / w).toFixed(1) + ' ' + ((d * u + e * v + A[1]) / w).toFixed(1);
  }
  var NU = 15, NV = 12, s = '';
  for (var i = 0; i <= NU; i++) s += 'M' + p(i / NU, 0) + 'L' + p(i / NU, 1);
  for (var j = 0; j <= NV; j++) s += 'M' + p(0, j / NV) + 'L' + p(1, j / NV);
  document.getElementById('grid-lines').setAttribute('d', s);
})();
```
